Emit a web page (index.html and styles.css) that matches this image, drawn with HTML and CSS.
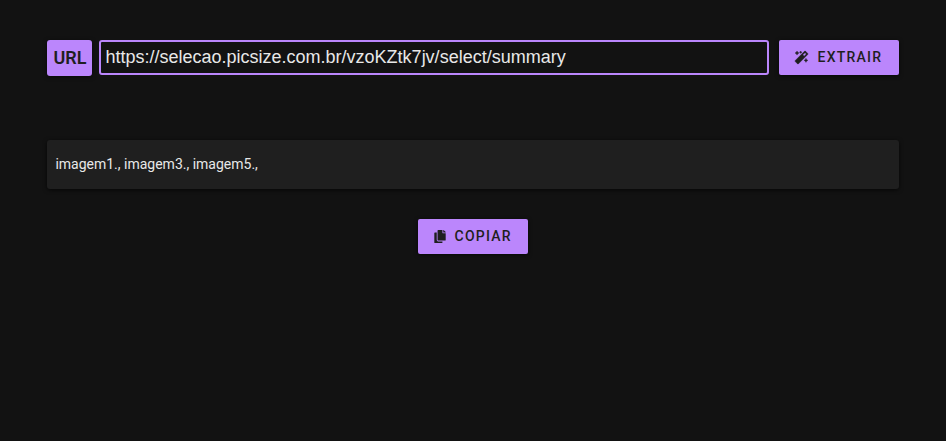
FILE: index.html
```html
<!DOCTYPE html>
<html lang="pt-BR">
<head>
<meta charset="utf-8">
<title>Extrair</title>
<link rel="stylesheet" href="styles.css">
</head>
<body>
<main class="page">
  <form class="bar">
    <label class="tag" for="url">URL</label>
    <input class="url" id="url" type="text" spellcheck="false" value="https://selecao.picsize.com.br/vzoKZtk7jv/select/summary">
    <button class="btn extract" type="button">
      <svg class="icon" viewBox="0 0 512 512"><path d="M224 96l16-32 32-16-32-16-16-32-16 32-32 16 32 16 16 32zM80 160l26.66-53.33L160 80l-53.34-26.67L80 0 53.34 53.33 0 80l53.34 26.67L80 160zm352 128l-26.66 53.33L352 368l53.34 26.67L432 448l26.66-53.33L512 368l-53.34-26.67L432 288zm70.62-193.77L417.77 9.38C411.53 3.12 403.34 0 395.15 0c-8.19 0-16.38 3.12-22.63 9.38L9.38 372.52c-12.5 12.5-12.5 32.76 0 45.25l84.85 84.85c6.25 6.25 14.44 9.37 22.62 9.37 8.19 0 16.38-3.12 22.63-9.37l363.14-363.15c12.5-12.48 12.5-32.75 0-45.24zM359.45 203.46l-50.91-50.91 86.6-86.6 50.91 50.91-86.6 86.6z"/></svg>
      <span>EXTRAIR</span>
    </button>
  </form>
  <section class="result">imagem1., imagem3., imagem5.,</section>
  <button class="btn copy" type="button">
    <svg class="icon" viewBox="0 0 448 512"><path d="M320 448v40c0 13.255-10.745 24-24 24H24c-13.255 0-24-10.745-24-24V120c0-13.255 10.745-24 24-24h72v296c0 30.879 25.121 56 56 56h168zm0-344V0H152c-13.255 0-24 10.745-24 24v368c0 13.255 10.745 24 24 24h272c13.255 0 24-10.745 24-24V128H344c-13.2 0-24-10.8-24-24zm120.971-31.029L375.029 7.029A24 24 0 0 0 358.059 0H352v96h96v-6.059a24 24 0 0 0-7.029-16.97z"/></svg>
    <span>COPIAR</span>
  </button>
</main>
</body>
</html>
```
FILE: styles.css
```css
* {
  box-sizing: border-box;
}

body {
  margin: 0;
  min-height: 100vh;
  background: #121212;
  color: #e8e8e8;
  font-family: Roboto, sans-serif;
}

.page {
  display: flex;
  flex-direction: column;
  padding: 40px 47px 0;
}

.bar {
  display: flex;
  align-items: flex-start;
  height: 36px;
}

.tag {
  width: 45px;
  height: 36px;
  margin-right: 7px;
  padding-left: 1px;
  border-radius: 3px;
  background: #bb86fc;
  color: #1f1f1f;
  font-size: 18px;
  font-weight: 600;
  line-height: 36px;
  text-align: center;
  box-shadow: 0 1px 4px rgba(0, 0, 0, 0.6);
}

.url {
  flex: 1;
  min-width: 0;
  height: 35px;
  margin-right: 10px;
  padding: 0 4px 1px 4.5px;
  border: 2px solid #bb86fc;
  border-radius: 3px;
  outline: none;
  background: #121212;
  color: #e8e8e8;
  font: 18px "Liberation Sans", Arial, sans-serif;
}

.btn {
  display: flex;
  align-items: center;
  height: 35px;
  padding: 0 0 1px 16px;
  border: 0;
  border-radius: 2px;
  background: #bb86fc;
  color: #1f1f1f;
  font: 500 14px Roboto, sans-serif;
  letter-spacing: 1.25px;
  box-shadow: 0 1px 4px rgba(0, 0, 0, 0.6);
}

.icon {
  height: 13px;
  fill: currentColor;
  overflow: visible;
}

.extract {
  width: 120px;
}

.extract .icon {
  width: 13px;
  margin-right: 9.5px;
  stroke: currentColor;
  stroke-width: 14;
}

.copy {
  align-self: center;
  width: 110px;
  margin-top: 30px;
}

.copy .icon {
  width: 12px;
  margin-right: 8.5px;
}

.result {
  height: 49px;
  margin-top: 64px;
  padding-left: 8.4px;
  border-radius: 3px;
  background: #1f1f1f;
  font-size: 14px;
  line-height: 49px;
  box-shadow: 0 1px 4px rgba(0, 0, 0, 0.7);
}
```
